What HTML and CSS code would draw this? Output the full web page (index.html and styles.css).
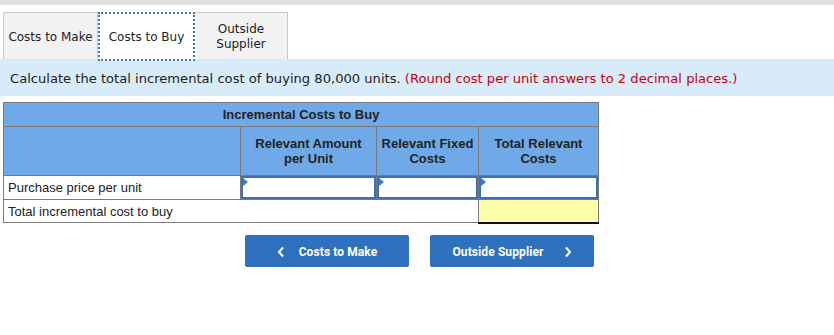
FILE: index.html
```html
<!DOCTYPE html>
<html lang="en">
<head>
  <meta charset="UTF-8" />
  <title>Costs to Buy</title>
  <link rel="stylesheet" href="styles.css">
</head>
<body>
  <div class="topbar"></div>
  <div class="tabs">
    <div class="tab">Costs to Make</div>
    <div class="tab active">Costs to Buy</div>
    <div class="tab">Outside<br>Supplier</div>
  </div>
  <div class="instructions">
    Calculate the total incremental cost of buying 80,000 units.&nbsp;<span class="note">(Round cost per unit answers to 2 decimal places.)</span>
  </div>
  <table class="costs">
    <colgroup>
      <col class="c-label">
      <col class="c-amount">
      <col class="c-fixed">
      <col class="c-total">
    </colgroup>
    <tr class="head-1">
      <th colspan="4">Incremental Costs to Buy</th>
    </tr>
    <tr class="head-2">
      <th></th>
      <th>Relevant Amount<br>per Unit</th>
      <th>Relevant Fixed<br>Costs</th>
      <th>Total Relevant<br>Costs</th>
    </tr>
    <tr>
      <td class="label">Purchase price per unit</td>
      <td class="entry"><div class="input"></div></td>
      <td class="entry"><div class="input"></div></td>
      <td class="entry"><div class="input"></div></td>
    </tr>
    <tr class="total-row">
      <td class="label" colspan="3">Total incremental cost to buy</td>
      <td class="answer"></td>
    </tr>
  </table>
  <div class="nav-buttons">
    <button class="btn">
      <svg class="chev" width="8" height="12" viewBox="0 0 8 12"><path d="M6 1.5 L2 6 L6 10.5" fill="none" stroke="#fff" stroke-width="2"/></svg>
      Costs to Make
    </button>
    <button class="btn">
      Outside Supplier
      <svg class="chev right" width="8" height="12" viewBox="0 0 8 12"><path d="M2 1.5 L6 6 L2 10.5" fill="none" stroke="#fff" stroke-width="2"/></svg>
    </button>
  </div>
</body>
</html>
```

FILE: styles.css
```css
body {
  margin: 0;
  background: #fff;
  color: #222;
  font-family: 'DejaVu Sans', Verdana, sans-serif;
}
/* --- top strip --- */
.topbar {
  height: 5px;
  background: #e0e0e0;
}
/* --- tabs --- */
.tabs {
  display: flex;
  padding: 7px 0 0 3px;
  height: 47px;
}
.tab {
  box-sizing: border-box;
  height: 47px;
  width: 95px;
  display: flex;
  align-items: center;
  justify-content: center;
  text-align: center;
  padding-top: 2px;
  font-size: 12px;
  line-height: 15px;
  background: #f2f2f2;
  border: 1px solid #c8c8c8;
  border-bottom: none;
  color: #222;
}
.tab.active {
  background: #fff;
  border: 2px dotted #3b74c9;
  height: 49px;
  width: 97px;
  margin: 0 -1px 0 0;
  position: relative;
  z-index: 1;
}
.tab:last-child {
  width: 94px;
}
/* --- instruction bar --- */
.instructions {
  height: 37px;
  display: flex;
  align-items: center;
  padding: 1px 0 0 10px;
  box-sizing: border-box;
  background: #d7ebf9;
  font-size: 13.1px;
  color: #222;
}
.note {
  color: #c5000f;
}
/* --- table --- */
.costs {
  margin: 6px 0 0 3px;
  border-collapse: collapse;
  font-family: 'Liberation Sans', Arial, sans-serif;
  font-size: 13px;
  table-layout: fixed;
  width: 595px;
}
.c-label { width: 237px; }
.c-amount { width: 136px; }
.c-fixed { width: 102px; }
.c-total { width: 120px; }
.costs th {
  background: #70a9e7;
  border: 1px solid #7a7a7a;
  font-weight: bold;
  color: #222;
  padding: 0;
  line-height: 15px;
}
.head-1 th {
  height: 23px;
}
.head-2 th {
  height: 48px;
}
.costs td {
  border: 1px solid #7a7a7a;
  padding: 0;
  height: 22px;
}
.costs td.label {
  padding: 1px 0 0 4px;
  line-height: 18px;
}
.total-row td {
  height: 21px;
}
.input {
  box-sizing: border-box;
  height: 23px;
  border: 2px solid #3c6fb4;
  background: #fff;
  position: relative;
}
.input::before {
  content: '';
  position: absolute;
  top: 0;
  left: 0;
  border-top: 4px solid transparent;
  border-bottom: 4px solid transparent;
  border-left: 5px solid #3c79c8;
}
.answer {
  background: #ffffa9;
  border-bottom: 2px solid #111 !important;
}
/* --- buttons --- */
.nav-buttons {
  display: flex;
  gap: 21px;
  padding: 11px 0 0 245px;
}
.btn {
  width: 164px;
  height: 32px;
  border: none;
  border-radius: 2px;
  background: #3071bf;
  color: #fff;
  font-family: 'Roboto', 'Liberation Sans', sans-serif;
  font-weight: bold;
  font-size: 12px;
  letter-spacing: 0.1px;
  display: flex;
  align-items: center;
  justify-content: center;
  gap: 14px;
  padding: 2px 0 0;
}
.chev.right {
  margin-left: 6px;
}
```
